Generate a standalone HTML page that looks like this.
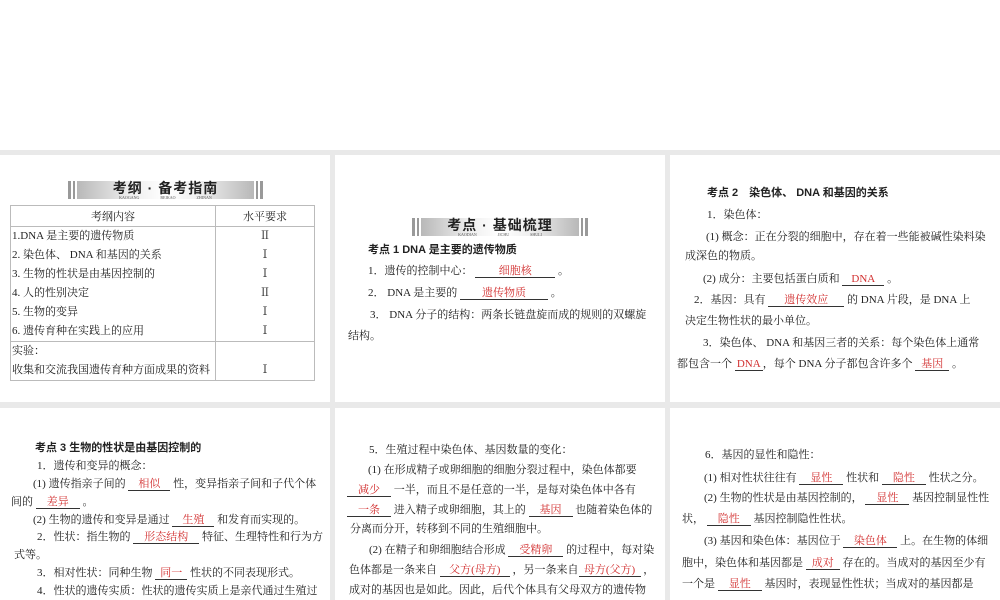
<!DOCTYPE html>
<html><head><meta charset="utf-8">
<style>
*{margin:0;padding:0;box-sizing:border-box}
body{width:1000px;height:600px;background:#fff;position:relative;overflow:hidden;font-family:"Liberation Serif","Noto Serif CJK SC",serif;font-size:11px;color:#222}
#bg{position:absolute;left:0;top:150px;width:1000px;height:450px;background:#e9e9e9}
.p{position:absolute;background:#fff}
.l{position:absolute;white-space:nowrap;line-height:14px;height:14px}
.b{display:inline-block;border-bottom:1px solid #333;color:#d23030;text-align:center;line-height:12px}
.bn{position:absolute;height:18px}
.bn .g{position:absolute;top:0;height:18px;background:linear-gradient(90deg,#b8b8b8,#eee 30%,#fff 50%,#eee 70%,#b8b8b8)}
.bn .bar{position:absolute;top:0;height:18px;width:3px;background:#999}
.bn .t{position:absolute;top:-1px;left:0;right:0;text-align:center;font-weight:bold;font-size:14px;line-height:16px;font-family:"Liberation Sans","Noto Sans CJK SC",sans-serif;letter-spacing:1px}
.bn .s{position:absolute;top:14px;left:0;right:0;text-align:center;font-size:4px;color:#555;word-spacing:20px}
table{position:absolute;left:10px;top:205px;width:305px;border-collapse:collapse;font-size:11px}
td{border:1px solid #bbb;padding:0 1px}
.bd{font-weight:bold;font-family:"Liberation Sans","Noto Sans CJK SC",sans-serif}
</style></head><body>
<div id="bg"></div>
<div class="p" style="left:0;top:155px;width:330px;height:247px"></div>
<div class="p" style="left:335px;top:155px;width:330px;height:247px"></div>
<div class="p" style="left:670px;top:155px;width:330px;height:247px"></div>
<div class="p" style="left:0;top:408px;width:330px;height:192px"></div>
<div class="p" style="left:335px;top:408px;width:330px;height:192px"></div>
<div class="p" style="left:670px;top:408px;width:330px;height:192px"></div>

<div class="bn" style="left:68px;top:181px;width:195px">
<div class="bar" style="left:0"></div><div class="bar" style="left:5px;width:2px"></div>
<div class="g" style="left:9px;width:177px"></div>
<div class="bar" style="left:188px;width:2px"></div><div class="bar" style="left:192px"></div>
<div class="t">考纲 · 备考指南</div><div class="s">KAOGANG BEIKAO ZHINAN</div></div>

<table>
<tr style="height:21px"><td style="text-align:center;width:205px">考纲内容</td><td style="text-align:center">水平要求</td></tr>
<tr style="height:114px;vertical-align:top"><td style="line-height:19px;padding-top:0">1.DNA 是主要的遗传物质<br>2. 染色体、 DNA 和基因的关系<br>3. 生物的性状是由基因控制的<br>4. 人的性别决定<br>5. 生物的变异<br>6. 遗传育种在实践上的应用</td><td style="text-align:center;line-height:19px">Ⅱ<br>Ⅰ<br>Ⅰ<br>Ⅱ<br>Ⅰ<br>Ⅰ</td></tr>
<tr style="height:38px"><td style="line-height:19px">实验：<br>收集和交流我国遗传育种方面成果的资料</td><td style="text-align:center;vertical-align:bottom;line-height:19px">Ⅰ</td></tr>
</table>

<div class="bn" style="left:412px;top:218px;width:176px">
<div class="bar" style="left:0"></div><div class="bar" style="left:5px;width:2px"></div>
<div class="g" style="left:9px;width:158px"></div>
<div class="bar" style="left:169px;width:2px"></div><div class="bar" style="left:173px"></div>
<div class="t">考点 · 基础梳理</div><div class="s">KAODIAN JICHU SHULI</div></div>

<div class="l bd" style="left:368px;top:243px">考点 1 DNA 是主要的遗传物质</div>
<div class="l" style="left:368px;top:264px">1．遗传的控制中心： <span class="b" style="width:80px">细胞核</span> 。</div>
<div class="l" style="left:368px;top:286px">2． DNA 是主要的 <span class="b" style="width:88px">遗传物质</span> 。</div>
<div class="l" style="left:370px;top:308px">3． DNA 分子的结构：两条长链盘旋而成的规则的双螺旋</div>
<div class="l" style="left:348px;top:329px">结构。</div>

<div class="l bd" style="left:707px;top:186px">考点 2　染色体、 DNA 和基因的关系</div>
<div class="l" style="left:707px;top:208px">1．染色体：</div>
<div class="l" style="left:706px;top:230px">(1) 概念：正在分裂的细胞中，存在着一些能被碱性染料染</div>
<div class="l" style="left:685px;top:249px">成深色的物质。</div>
<div class="l" style="left:703px;top:272px">(2) 成分：主要包括蛋白质和 <span class="b" style="width:42px">DNA</span> 。</div>
<div class="l" style="left:694px;top:293px">2．基因：具有 <span class="b" style="width:76px">遗传效应</span> 的 DNA 片段，是 DNA 上</div>
<div class="l" style="left:685px;top:314px">决定生物性状的最小单位。</div>
<div class="l" style="left:703px;top:336px">3．染色体、 DNA 和基因三者的关系：每个染色体上通常</div>
<div class="l" style="left:677px;top:357px">都包含一个 <span class="b" style="width:28px">DNA</span>，每个 DNA 分子都包含许多个 <span class="b" style="width:34px">基因</span> 。</div>

<div class="l bd" style="left:35px;top:441px">考点 3 生物的性状是由基因控制的</div>
<div class="l" style="left:37px;top:459px">1．遗传和变异的概念：</div>
<div class="l" style="left:33px;top:477px">(1) 遗传指亲子间的 <span class="b" style="width:42px">相似</span> 性，变异指亲子间和子代个体</div>
<div class="l" style="left:11px;top:495px">间的 <span class="b" style="width:44px">差异</span> 。</div>
<div class="l" style="left:33px;top:513px">(2) 生物的遗传和变异是通过 <span class="b" style="width:42px">生殖</span> 和发育而实现的。</div>
<div class="l" style="left:37px;top:530px">2．性状：指生物的 <span class="b" style="width:66px">形态结构</span> 特征、生理特性和行为方</div>
<div class="l" style="left:14px;top:548px">式等。</div>
<div class="l" style="left:37px;top:566px">3．相对性状：同种生物 <span class="b" style="width:32px">同一</span> 性状的不同表现形式。</div>
<div class="l" style="left:37px;top:584px">4．性状的遗传实质：性状的遗传实质上是亲代通过生殖过</div>

<div class="l" style="left:369px;top:443px">5．生殖过程中染色体、基因数量的变化：</div>
<div class="l" style="left:368px;top:463px">(1) 在形成精子或卵细胞的细胞分裂过程中，染色体都要</div>
<div class="l" style="left:347px;top:483px"><span class="b" style="width:44px">减少</span> 一半，而且不是任意的一半，是每对染色体中各有</div>
<div class="l" style="left:347px;top:503px"><span class="b" style="width:44px">一条</span> 进入精子或卵细胞，其上的 <span class="b" style="width:44px">基因</span> 也随着染色体的</div>
<div class="l" style="left:350px;top:522px">分离而分开，转移到不同的生殖细胞中。</div>
<div class="l" style="left:369px;top:543px">(2) 在精子和卵细胞结合形成 <span class="b" style="width:55px">受精卵</span> 的过程中，每对染</div>
<div class="l" style="left:349px;top:563px">色体都是一条来自 <span class="b" style="width:70px">父方(母方)</span> ，另一条来自<span class="b" style="width:62px">母方(父方)</span> ，</div>
<div class="l" style="left:349px;top:583px">成对的基因也是如此。因此，后代个体具有父母双方的遗传物</div>

<div class="l" style="left:705px;top:448px">6．基因的显性和隐性：</div>
<div class="l" style="left:704px;top:471px">(1) 相对性状往往有 <span class="b" style="width:44px">显性</span> 性状和 <span class="b" style="width:44px">隐性</span> 性状之分。</div>
<div class="l" style="left:704px;top:491px">(2) 生物的性状是由基因控制的， <span class="b" style="width:44px">显性</span> 基因控制显性性</div>
<div class="l" style="left:682px;top:512px">状， <span class="b" style="width:44px">隐性</span> 基因控制隐性性状。</div>
<div class="l" style="left:704px;top:534px">(3) 基因和染色体：基因位于 <span class="b" style="width:54px">染色体</span> 上。在生物的体细</div>
<div class="l" style="left:682px;top:556px">胞中，染色体和基因都是 <span class="b" style="width:34px">成对</span> 存在的。当成对的基因至少有</div>
<div class="l" style="left:682px;top:577px">一个是 <span class="b" style="width:44px">显性</span> 基因时，表现显性性状；当成对的基因都是</div>
</body></html>
